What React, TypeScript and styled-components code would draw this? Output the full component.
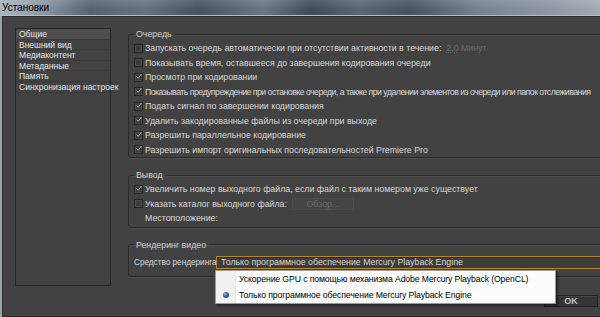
import styled, { createGlobalStyle } from 'styled-components';

const GlobalStyle = createGlobalStyle`
  html, body {
    margin: 0;
    padding: 0;
    overflow: hidden;
    background: #8a949e;
  }
  * { box-sizing: border-box; }
`;

const Window = styled.div`
  width: 600px;
  height: 317px;
  display: flex;
  flex-direction: column;
  background: #9aa3ab;
  font-family: "Liberation Sans", Arial, sans-serif;
  overflow: hidden;
`;

const TitleBar = styled.div`
  height: 16px;
  flex-shrink: 0;
  display: flex;
  align-items: center;
  padding-left: 2px;
  font-size: 10px;
  color: #000;
  background:
    linear-gradient(180deg, rgba(255, 255, 255, 0.12) 0%, rgba(255, 255, 255, 0) 60%),
    linear-gradient(90deg, #a9b3bd 0%, #8c98a3 7%, #56636f 15%, #66727e 24%, #47535f 33%,
      #6a7683 44%, #3f4b58 52%, #5b6774 60%, #47525e 68%, #78838f 80%, #8e98a2 92%, #a2abb4 100%);
  border-bottom: 1px solid #b5bcc3;
`;

const Body = styled.div`
  flex: 1;
  margin-left: 2px;
  display: flex;
  flex-direction: column;
  padding: 11px 0 7px 12px;
  background: #424242;
  border-top: 1px solid #2e2e2e;
  border-left: 1px solid #2e2e2e;
  border-bottom: 1px solid #262626;
  overflow: hidden;
  color: #d8d8d8;
  font-size: 8.8px;
`;

const Main = styled.div`
  display: flex;
  gap: 17px;
  align-items: flex-start;
`;

const Sidebar = styled.ul`
  list-style: none;
  margin: 0;
  padding: 0;
  width: 96px;
  height: 258px;
  flex-shrink: 0;
  border: 1px solid #272727;
  background: #424242;
`;

const NavItem = styled.li<{ $active?: boolean }>`
  height: 10.6px;
  line-height: 10.6px;
  padding-left: 3px;
  white-space: nowrap;
  color: #e4e4e4;
  font-size: 8.5px;
  background: ${p => (p.$active ? '#4e4e4e' : 'transparent')};
  box-shadow: inset 0 -1px 0 #3b3b3b;
`;

const Content = styled.div`
  width: 490px;
  flex-shrink: 0;
  display: flex;
  flex-direction: column;
  gap: 11px;
`;

const Group = styled.fieldset<{ $pb?: number }>`
  margin: 0;
  padding: 1px 8px ${p => p.$pb ?? 0}px 5px;
  border: 1px solid #2c2c2c;
  border-radius: 3px;
  box-shadow: 0 1px 0 #4d4d4d, inset 0 1px 0 #4d4d4d;
  min-width: 0;
`;

const Legend = styled.legend`
  padding: 0 3px 0 2px;
  font-size: 8.8px;
  line-height: 12px;
  color: #d0d0d0;
`;

const Row = styled.div<{ $indent?: number; $tight?: boolean }>`
  height: 14.5px;
  display: flex;
  align-items: center;
  white-space: nowrap;
  padding-left: ${p => p.$indent ?? 0}px;
  letter-spacing: ${p => (p.$tight ? '-0.55px' : 'normal')};
`;

const Box = styled.span`
  width: 9px;
  height: 9px;
  flex-shrink: 0;
  margin-right: 2px;
  border: 1px solid #262626;
  background: #3a3a3a;
  box-shadow: inset 0 0 0 1px #4a4a4a;
  display: flex;
  align-items: center;
  justify-content: center;
  overflow: visible;
`;

const HotText = styled.span`
  margin-left: 5px;
  color: #6c6c6c;
  & u {
    text-decoration: underline dotted #6c6c6c;
  }
`;

const BrowseButton = styled.span`
  margin-left: 5px;
  width: 62px;
  height: 12px;
  display: flex;
  align-items: center;
  justify-content: center;
  border: 1px solid #4c4c4c;
  background: #454545;
  color: #6a6a6a;
`;

const RenderRow = styled.div`
  height: 13px;
  margin-top: 4px;
  display: flex;
  align-items: center;
  white-space: nowrap;
`;

const RenderLabel = styled.span`
  width: 82px;
  flex-shrink: 0;
  font-size: 8.2px;
`;

const Select = styled.div`
  position: relative;
  flex: 1;
  height: 13px;
  display: flex;
  align-items: center;
  padding-left: 4px;
  border: 1px solid #b7861b;
  box-shadow: inset 0 1px 0 #1f2a44;
  background: #3c3c3c;
  color: #d4d4d4;
`;

const Popup = styled.div`
  position: absolute;
  top: 13px;
  left: -2px;
  width: 341px;
  height: 34px;
  background: #fcfcfc;
  border: 1px solid #9a9a9a;
  box-shadow: 2px 2px 2px rgba(0, 0, 0, 0.45);
  display: flex;
  flex-direction: column;
  z-index: 5;
`;

const Gutter = styled.div`
  position: absolute;
  left: 0;
  top: 0;
  bottom: 0;
  width: 20px;
  background: #f1f1f1;
  border-right: 1px solid #e2e3e3;
  box-shadow: 1px 0 0 #ffffff;
`;

const MenuItem = styled.div`
  position: relative;
  height: 16px;
  display: flex;
  align-items: center;
  padding-left: 23px;
  font-size: 8.7px;
  letter-spacing: -0.12px;
  color: #000;
`;

const RadioDot = styled.span`
  position: absolute;
  left: 7px;
  top: 5px;
  width: 6px;
  height: 6px;
  border-radius: 50%;
  background: radial-gradient(circle at 35% 35%, #9fb4e8 0%, #3a58b0 45%, #1d2f6e 100%);
`;

const Footer = styled.div`
  margin-top: 9px;
  display: flex;
  justify-content: flex-end;
  padding-right: 2px;
`;

const OkButton = styled.div`
  width: 54px;
  height: 12px;
  display: flex;
  align-items: center;
  justify-content: center;
  border: 1px solid #222;
  background: #363636;
  box-shadow: inset 0 1px 0 #444;
  color: #c0c0c0;
  font-size: 9px;
  font-weight: bold;
`;

const Check = ({ on }: { on?: boolean }) => (
  <Box>
    {on && (
      <svg width="9" height="9" viewBox="0 0 9 9" style={{ marginTop: -2, marginLeft: 1 }}>
        <path d="M1 4.6 L3.3 7.2 L8.2 0.8" fill="none" stroke="#d4d4d4" strokeWidth="1.2" />
      </svg>
    )}
  </Box>
);

const navItems = ['Общие', 'Внешний вид', 'Медиаконтент', 'Метаданные', 'Память', 'Синхронизация настроек'];

const queue: [string, boolean, boolean?][] = [
  ['Показывать время, оставшееся до завершения кодирования очереди', false],
  ['Просмотр при кодировании', true],
  ['Показывать предупреждение при остановке очереди, а также при удалении элементов из очереди или папок отслеживания', true, true],
  ['Подать сигнал по завершении кодирования', true],
  ['Удалить закодированные файлы из очереди при выходе', true],
  ['Разрешить параллельное кодирование', true],
  ['Разрешить импорт оригинальных последовательностей Premiere Pro', true],
];

export default function App() {
  return (
    <>
      <GlobalStyle />
      <Window>
        <TitleBar>Установки</TitleBar>
        <Body>
          <Main>
            <Sidebar>
              {navItems.map((n, i) => (
                <NavItem key={n} $active={i === 0}>{n}</NavItem>
              ))}
            </Sidebar>
            <Content>
              <Group>
                <Legend>Очередь</Legend>
                <Row>
                  <Check />
                  Запускать очередь автоматически при отсутствии активности в течение:
                  <HotText><u>2,0</u> Минут</HotText>
                </Row>
                {queue.map(([t, on, tight]) => (
                  <Row key={t} $tight={tight}>
                    <Check on={on} />
                    {t}
                  </Row>
                ))}
              </Group>
              <Group $pb={1}>
                <Legend>Вывод</Legend>
                <Row>
                  <Check on />
                  Увеличить номер выходного файла, если файл с таким номером уже существует
                </Row>
                <Row>
                  <Check />
                  Указать каталог выходного файла:
                  <BrowseButton>Обзор...</BrowseButton>
                </Row>
                <Row $indent={11}>Местоположение:</Row>
              </Group>
              <Group $pb={7}>
                <Legend>Рендеринг видео</Legend>
                <RenderRow>
                  <RenderLabel>Средство рендеринга</RenderLabel>
                  <Select>
                    Только программное обеспечение Mercury Playback Engine
                    <Popup>
                      <Gutter />
                      <MenuItem>Ускорение GPU с помощью механизма Adobe Mercury Playback (OpenCL)</MenuItem>
                      <MenuItem>
                        <RadioDot />
                        Только программное обеспечение Mercury Playback Engine
                      </MenuItem>
                    </Popup>
                  </Select>
                </RenderRow>
              </Group>
            </Content>
          </Main>
          <Footer>
            <OkButton>OK</OkButton>
          </Footer>
        </Body>
      </Window>
    </>
  );
}
